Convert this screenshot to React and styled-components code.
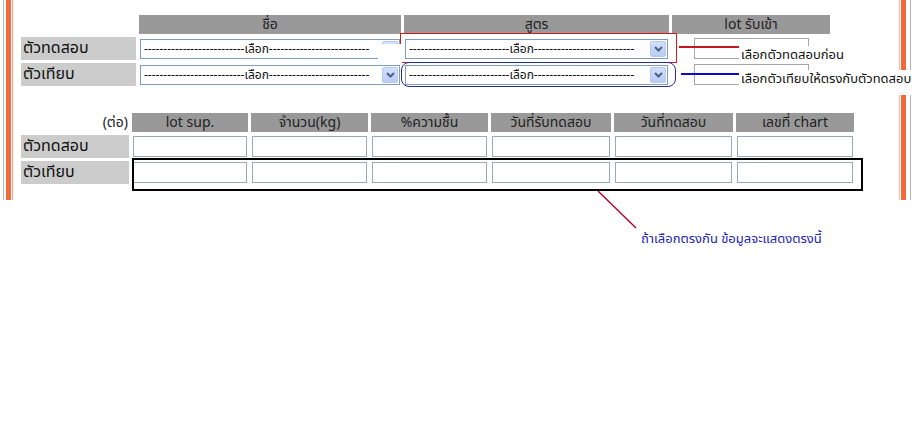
import React from "react";
import styled, { createGlobalStyle } from "styled-components";

const ORANGE = "#f26a3b";
const FONT = `Tahoma, "Noto Sans Thai", "Leelawadee UI", "DejaVu Sans", sans-serif`;

const GlobalStyle = createGlobalStyle`
  html, body {
    margin: 0;
    padding: 0;
    background: #fff;
  }
  body {
    font-family: ${FONT};
    font-size: 13px;
    color: #222;
  }
  * { box-sizing: border-box; }
`;

const Page = styled.div`
  position: relative;
  width: 912px;
  height: 432px;
  overflow: hidden;
`;

const Frame = styled.div`
  display: flex;
  height: 200px;
`;

const LeftRail = styled.div`
  width: 14px;
  background: linear-gradient(
    to right,
    #fff 0 3px,
    #b4b4b4 3px 4px,
    #fff 4px 6px,
    ${ORANGE} 6px 11px,
    #fff 11px 12px,
    #f6a07c 12px 13px,
    #fff 13px
  );
`;

const RightRail = styled.div`
  width: 13px;
  background: linear-gradient(
    to right,
    #f9bba2 0 1px,
    #fff 1px 2px,
    ${ORANGE} 2px 7px,
    #fff 7px 11px,
    #b4b4b4 11px 12px,
    #fff 12px
  );
`;

const Content = styled.div`
  flex: 1;
  padding: 15px 0 0 7px;
`;

const PickGrid = styled.div`
  display: grid;
  grid-template-columns: 115px 262px 265px 158px;
  grid-template-rows: 19px 23px 23px;
  gap: 3px;
`;

const DataGrid = styled.div`
  display: grid;
  grid-template-columns: 108px 116px 117px 117px 120px 119px 118px;
  grid-template-rows: 19px 23px 23px;
  gap: 3px;
  margin-top: 27px;
`;

const HeadCell = styled.div`
  background: #999;
  color: #222;
  font-size: 14px;
  text-align: center;
  line-height: 19px;
  white-space: nowrap;
`;

const Corner = styled.div`
  text-align: ${(p) => (p.$right ? "right" : "left")};
  font-size: 14px;
  line-height: 19px;
  padding-right: 1px;
`;

const RowLabel = styled.div`
  background: #ccc;
  color: #111;
  font-size: 16px;
  line-height: 23px;
  padding-left: 2px;
`;

const Cell = styled.div`
  display: flex;
  align-items: center;
  justify-content: ${(p) => (p.$center ? "center" : "stretch")};
  padding: 0 1px;
`;

const Select = styled.div`
  flex: 1;
  height: 20px;
  display: flex;
  align-items: center;
  background: #fff;
  border: 1px solid #7f9db9;
  padding: 0 1px 0 3px;
  gap: 4px;
`;

const SelectText = styled.span`
  flex: 1;
  overflow: hidden;
  white-space: nowrap;
  font-size: 12px;
  line-height: 18px;
  color: #111;
`;

const SelectButton = styled.span`
  width: 16px;
  height: 16px;
  display: flex;
  align-items: center;
  justify-content: center;
  background: linear-gradient(#d4e0fb, #b7cbf6);
  border: 1px solid #b6c8f0;
  border-radius: 2px;
`;

const Field = styled.div`
  height: 21px;
  width: ${(p) => p.$width || "100%"};
  background: #fff;
  border: 1px solid ${(p) => p.$tone || "#98aab4"};
`;

const Patch = styled.div`
  position: absolute;
  left: 378px;
  top: 44px;
  width: 24px;
  height: 20px;
  background: #fff;
`;

const MarkBox = styled.div`
  position: absolute;
  left: ${(p) => p.$x}px;
  top: ${(p) => p.$y}px;
  width: ${(p) => p.$w}px;
  height: ${(p) => p.$h}px;
  border: ${(p) => p.$line};
  border-radius: ${(p) => p.$radius || 0}px;
`;

const Rule = styled.div`
  position: absolute;
  left: ${(p) => p.$x}px;
  top: ${(p) => p.$y}px;
  width: ${(p) => p.$w}px;
  height: 2px;
  background: ${(p) => p.$color};
`;

const Note = styled.div`
  position: absolute;
  left: ${(p) => p.$x}px;
  top: ${(p) => p.$y}px;
  width: ${(p) => (p.$w ? `${p.$w}px` : "auto")};
  height: ${(p) => (p.$h ? `${p.$h}px` : "auto")};
  padding-left: 2px;
  background: ${(p) => (p.$plain ? "transparent" : "#fff")};
  color: ${(p) => p.$color || "#111"};
  line-height: 18px;
  white-space: nowrap;
`;

const Pointer = styled.svg`
  position: absolute;
  left: 596px;
  top: 189px;
`;

const Chevron = () => (
  <svg width="9" height="6" viewBox="0 0 9 6">
    <path d="M1 1 L4.5 4.5 L8 1" fill="none" stroke="#4d6185" strokeWidth="2" />
  </svg>
);

const DASHES = "-".repeat(26);

function Picker() {
  return (
    <Select>
      <SelectText>
        {DASHES}เลือก{DASHES}
      </SelectText>
      <SelectButton>
        <Chevron />
      </SelectButton>
    </Select>
  );
}

const dataColumns = [
  "lot sup.",
  "จำนวน(kg)",
  "%ความชื้น",
  "วันที่รับทดสอบ",
  "วันที่ทดสอบ",
  "เลขที่ chart",
];

const rows = ["ตัวทดสอบ", "ตัวเทียบ"];

export default function App() {
  return (
    <Page>
      <GlobalStyle />
      <Frame>
        <LeftRail />
        <Content>
          <PickGrid>
            <Corner />
            <HeadCell>ชื่อ</HeadCell>
            <HeadCell>สูตร</HeadCell>
            <HeadCell>lot รับเข้า</HeadCell>
            {rows.map((label) => (
              <React.Fragment key={label}>
                <RowLabel>{label}</RowLabel>
                <Cell>
                  <Picker />
                </Cell>
                <Cell>
                  <Picker />
                </Cell>
                <Cell $center>
                  <Field $width="115px" $tone="#a6a6a6" />
                </Cell>
              </React.Fragment>
            ))}
          </PickGrid>

          <DataGrid>
            <Corner $right>(ต่อ)</Corner>
            {dataColumns.map((c) => (
              <HeadCell key={c}>{c}</HeadCell>
            ))}
            {rows.map((label) => (
              <React.Fragment key={label}>
                <RowLabel>{label}</RowLabel>
                {dataColumns.map((c) => (
                  <Cell key={c}>
                    <Field />
                  </Cell>
                ))}
              </React.Fragment>
            ))}
          </DataGrid>
        </Content>
        <RightRail />
      </Frame>

      <MarkBox $x={400} $y={33} $w={277} $h={30} $line="1px solid #d21a1a" />
      <MarkBox $x={401} $y={62} $w={275} $h={25} $line="1px solid #2b2ba0" $radius={8} />
      <Patch />

      <Rule $x={679} $y={46} $w={60} $color="#c4161c" />
      <Rule $x={681} $y={73} $w={58} $color="#0a0acc" />
      <Note $x={739} $y={46} $h={16}>เลือกตัวทดสอบก่อน</Note>
      <Note $x={739} $y={70} $w={173} $h={25}>เลือกตัวเทียบให้ตรงกับตัวทดสอบ</Note>

      <MarkBox $x={132} $y={158} $w={731} $h={33} $line="2px solid #000" />
      <Pointer width="44" height="44" viewBox="0 0 44 44">
        <line x1="2" y1="2" x2="40" y2="39" stroke="#b5002a" strokeWidth="1.4" />
      </Pointer>
      <Note $x={639} $y={230} $color="#2424b4" $plain>
        ถ้าเลือกตรงกัน ข้อมูลจะแสดงตรงนี้
      </Note>
    </Page>
  );
}
